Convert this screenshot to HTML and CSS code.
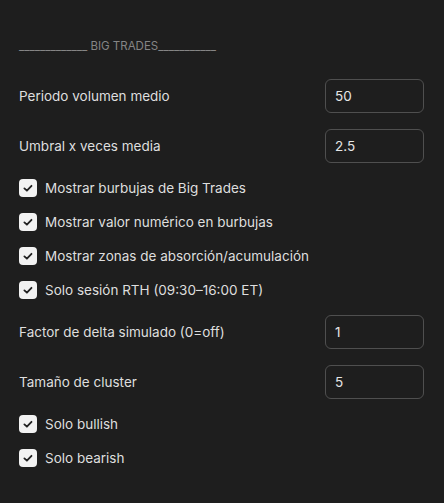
FILE: index.html
```html
<!DOCTYPE html>
<html>
<head>
<meta charset="utf-8">
<link rel="stylesheet" href="styles.css">
</head>
<body>
<div class="panel">
  <div class="section-title">_____________ BIG TRADES___________</div>
  <div class="field"><span class="label">Periodo volumen medio</span><div class="input">50</div></div>
  <div class="field"><span class="label">Umbral x veces media</span><div class="input">2.5</div></div>
  <div class="check"><span class="box"><svg viewBox="0 0 18 18" width="18" height="18"><path d="M5.4 9.4 L7.9 11.7 L12.5 6.8" fill="none" stroke="#222" stroke-width="1.8" stroke-linecap="round" stroke-linejoin="round"/></svg></span><span class="label">Mostrar burbujas de Big Trades</span></div>
  <div class="check"><span class="box"><svg viewBox="0 0 18 18" width="18" height="18"><path d="M5.4 9.4 L7.9 11.7 L12.5 6.8" fill="none" stroke="#222" stroke-width="1.8" stroke-linecap="round" stroke-linejoin="round"/></svg></span><span class="label">Mostrar valor numérico en burbujas</span></div>
  <div class="check"><span class="box"><svg viewBox="0 0 18 18" width="18" height="18"><path d="M5.4 9.4 L7.9 11.7 L12.5 6.8" fill="none" stroke="#222" stroke-width="1.8" stroke-linecap="round" stroke-linejoin="round"/></svg></span><span class="label">Mostrar zonas de absorción/acumulación</span></div>
  <div class="check"><span class="box"><svg viewBox="0 0 18 18" width="18" height="18"><path d="M5.4 9.4 L7.9 11.7 L12.5 6.8" fill="none" stroke="#222" stroke-width="1.8" stroke-linecap="round" stroke-linejoin="round"/></svg></span><span class="label">Solo sesión RTH (09:30–16:00 ET)</span></div>
  <div class="field"><span class="label">Factor de delta simulado (0=off)</span><div class="input">1</div></div>
  <div class="field"><span class="label">Tamaño de cluster</span><div class="input">5</div></div>
  <div class="check"><span class="box"><svg viewBox="0 0 18 18" width="18" height="18"><path d="M5.4 9.4 L7.9 11.7 L12.5 6.8" fill="none" stroke="#222" stroke-width="1.8" stroke-linecap="round" stroke-linejoin="round"/></svg></span><span class="label">Solo bullish</span></div>
  <div class="check"><span class="box"><svg viewBox="0 0 18 18" width="18" height="18"><path d="M5.4 9.4 L7.9 11.7 L12.5 6.8" fill="none" stroke="#222" stroke-width="1.8" stroke-linecap="round" stroke-linejoin="round"/></svg></span><span class="label">Solo bearish</span></div>
</div>
</body>
</html>
```
FILE: styles.css
```css
html, body {
  margin: 0;
  padding: 0;
  background: #1e1e1e;
  height: 100%;
}
body {
  font-family: Inter, "Noto Sans", sans-serif;
  color: #dedede;
  font-size: 13.5px;
  font-weight: 380;
}
.panel {
  padding: 36px 20px 0 19px;
}
.section-title {
  font-size: 11.5px;
  color: #858585;
  height: 35px;
  line-height: 20px;
  white-space: nowrap;
}
.field {
  display: flex;
  align-items: center;
  justify-content: space-between;
  height: 50px;
}
.input {
  width: 99px;
  height: 34px;
  box-sizing: border-box;
  border: 1px solid #4f4f4f;
  border-radius: 6px;
  padding: 0 9px;
  display: flex;
  align-items: center;
  color: #e6e6e6;
}
.check {
  display: flex;
  align-items: center;
  height: 34px;
  gap: 8px;
}
.box {
  width: 18px;
  height: 18px;
  border-radius: 4px;
  background: #f2f2f2;
  display: flex;
  flex: none;
}
```
